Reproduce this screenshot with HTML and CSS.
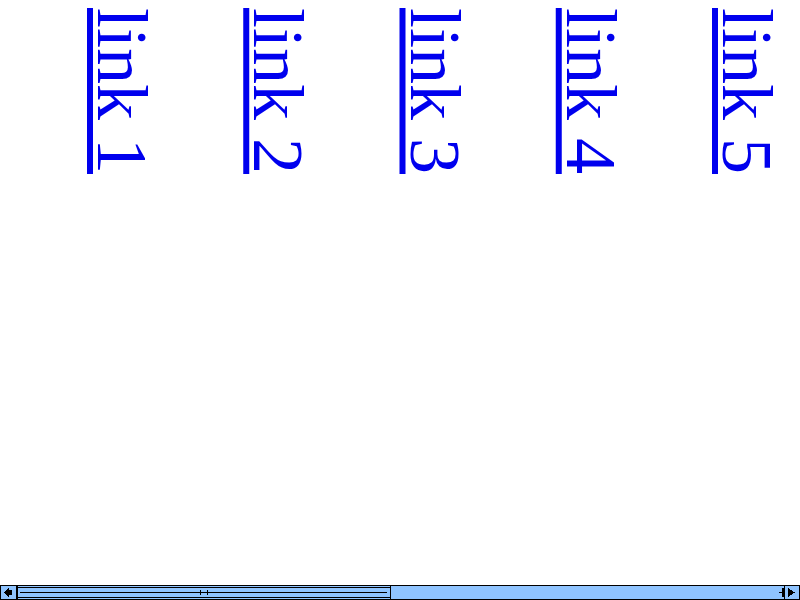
FILE: index.html
```html
<!DOCTYPE html>
<html lang="en">
<head>
<meta charset="utf-8">
<title>Links</title>
<link rel="stylesheet" href="styles.css">
</head>
<body>
<nav class="links">
  <a class="link" href="#1">link 1</a>
  <a class="link" href="#2">link 2</a>
  <a class="link" href="#3">link 3</a>
  <a class="link" href="#4">link 4</a>
  <a class="link" href="#5">link 5</a>
</nav>
<div class="scrollbar" aria-hidden="true">
  <svg class="scrollbar-svg" width="800" height="15" viewBox="0 0 800 15" shape-rendering="crispEdges">
    <rect x="0" y="0" width="800" height="15" fill="#8fc4ff"/>
    <g fill="#000">
      <rect x="0" y="0" width="800" height="1"/>
      <rect x="0" y="14" width="800" height="1"/>
      <rect x="0" y="0" width="1" height="15"/>
      <rect x="799" y="0" width="1" height="15"/>
      <rect x="16" y="0" width="1" height="15"/>
      <polygon points="4,7 9,2.5 9,5 12,5 12,10 9,10 9,12.5"/>
      <rect x="17" y="0" width="1" height="15"/>
      <rect x="390" y="0" width="1" height="15"/>
      <rect x="17" y="2" width="374" height="1"/>
      <rect x="17" y="12" width="374" height="1"/>
      <rect x="20" y="7" width="367" height="1"/>
      <rect x="200" y="5" width="1" height="5"/>
      <rect x="207" y="5" width="1" height="5"/>
      <rect x="779" y="7" width="4" height="1"/>
      <rect x="782" y="3" width="2" height="9"/>
      <rect x="784" y="0" width="1" height="15"/>
      <polygon points="788,3 795,7.5 788,12"/>
    </g>
  </svg>
</div>
</body>
</html>
```
FILE: styles.css
```css
html, body {
  margin: 0;
  padding: 0;
  background: #fff;
}
body {
  margin: 8px;
  overflow: hidden;
}
.links {
  display: flex;
  align-items: flex-start;
  gap: 74.25px;
  padding-left: 73px;
}
.link {
  writing-mode: vertical-rl;
  font-family: "Liberation Serif", "Times New Roman", serif;
  font-size: 72px;
  line-height: 82px;
  color: #0000ee;
  text-decoration: underline;
  text-decoration-thickness: 6px;
  text-underline-position: left;
  text-underline-offset: -8px;
  white-space: nowrap;
}
.scrollbar {
  position: fixed;
  left: 0;
  bottom: 0;
  width: 800px;
  height: 15px;
  line-height: 0;
}
.scrollbar-svg {
  display: block;
}
```
